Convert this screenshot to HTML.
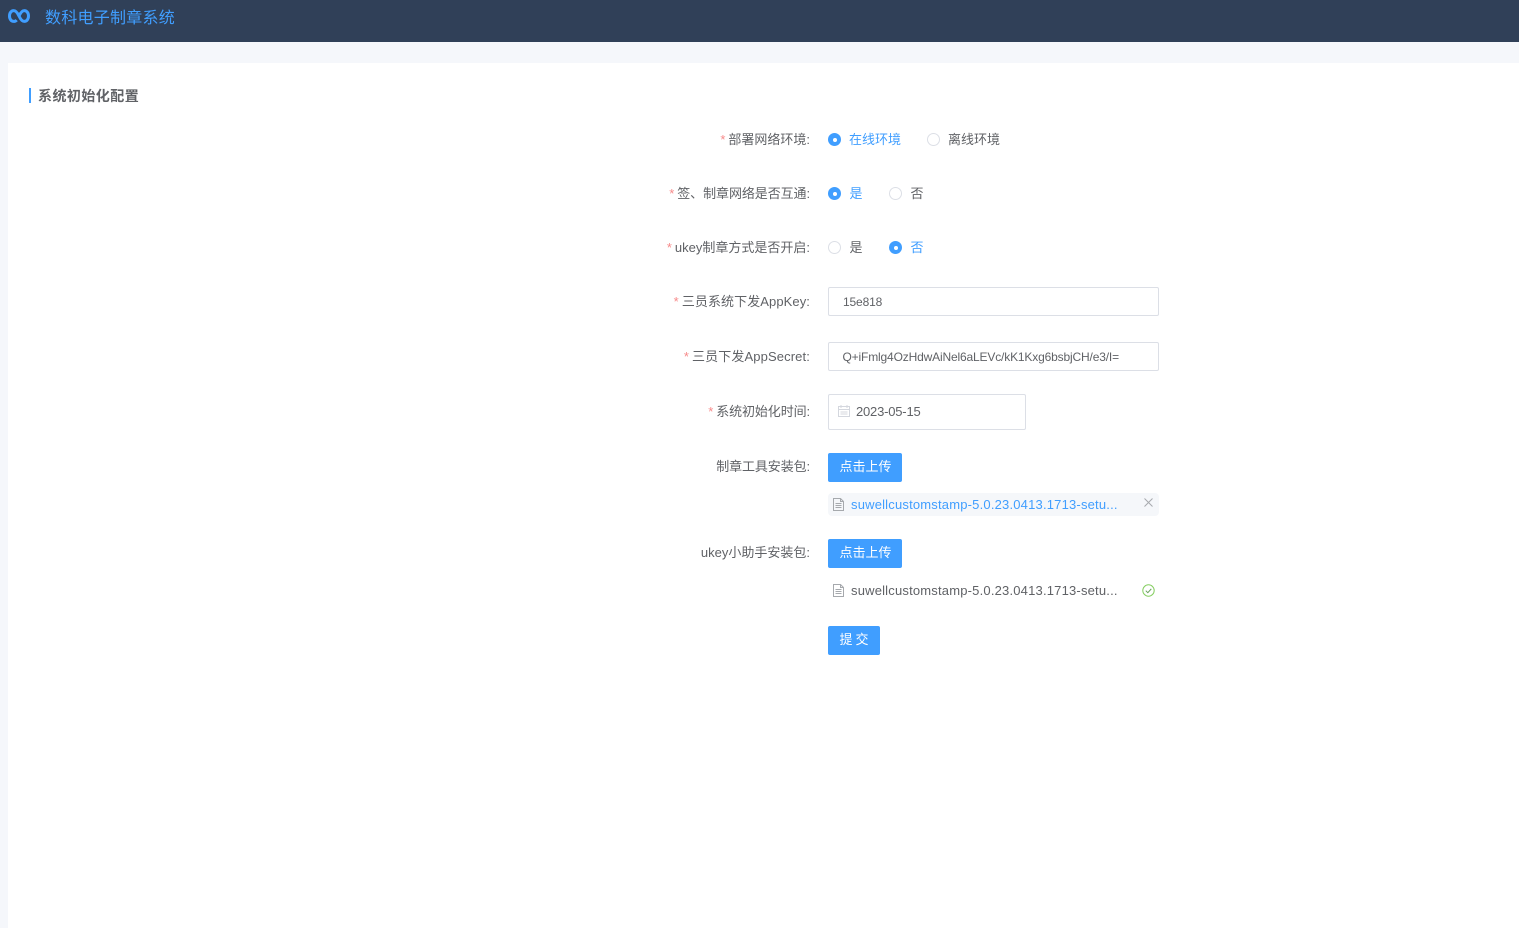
<!DOCTYPE html>
<html lang="zh-CN">
<head>
<meta charset="utf-8">
<title>数科电子制章系统</title>
<style>
html,body{margin:0;padding:0;width:1519px;height:928px;overflow:hidden;background:#f5f7fb;}
body{position:relative;font-family:"Liberation Sans","Noto Sans CJK SC",sans-serif;font-size:13px;color:#606266;}
.a{position:absolute;white-space:nowrap;}
.hdr{left:0;top:0;width:1519px;height:42px;background:#304058;}
.main{left:8px;top:63px;width:1511px;height:865px;background:#fff;}
.lb{right:709px;height:20px;line-height:20px;font-size:13px;color:#606266;}
.lb i{font-style:normal;color:#f78989;margin-right:3px;}
.r{width:11px;height:11px;border:1px solid #dcdfe6;border-radius:50%;background:#fff;}
.r.on{background:#409eff;border-color:#409eff;}
.r.on:after{content:"";position:absolute;left:4px;top:4px;width:4px;height:4px;border-radius:50%;background:#fff;}
.t{height:20px;line-height:20px;font-size:13px;color:#606266;}
.t.on{color:#409eff;}
.in{box-sizing:border-box;border:1px solid #dcdfe6;border-radius:2px;background:#fff;font-size:12px;color:#606266;padding-left:14px;}
.btn{background:#409eff;color:#fff;border-radius:2px;font-size:13px;text-align:center;}
.fn{height:20px;line-height:20px;font-size:13px;letter-spacing:.19px;}
</style>
</head>
<body>
<div class="a hdr"></div>
<svg class="a" style="left:8px;top:9px" width="22" height="14" viewBox="0 0 22 14" fill="none" stroke="#409eff" stroke-width="3">
<path d="M11 7C9.500 3.800 8 1.600 5.700 1.600 3.200 1.600 1.500 4 1.500 7s1.700 5.400 4.200 5.400c1.300 0 2.300-.5 3-1.300"/>
<path d="M11 7c1.500-3.200 3-5.400 5.300-5.400 2.500 0 4.200 2.400 4.200 5.400s-1.700 5.400-4.200 5.400c-2.300 0-3.800-2.200-5.300-5.400z"/>
</svg>
<div class="a" style="left:45px;top:9px;height:20px;line-height:20px;font-size:16px;letter-spacing:.25px;color:#409eff">数科电子制章系统</div>

<div class="a main"></div>
<div class="a" style="left:29px;top:88px;width:2px;height:15px;background:#409eff"></div>
<div class="a" style="left:38px;top:86px;height:20px;line-height:20px;font-size:14px;letter-spacing:.45px;font-weight:700;color:#606266">系统初始化配置</div>

<div class="a lb" style="top:130px"><i>*</i>部署网络环境:</div>
<div class="a r on" style="left:828px;top:133px"></div>
<div class="a t on" style="left:849px;top:130px">在线环境</div>
<div class="a r" style="left:927px;top:133px"></div>
<div class="a t" style="left:948px;top:130px">离线环境</div>

<div class="a lb" style="top:184px;letter-spacing:-.08px"><i>*</i>签、制章网络是否互通:</div>
<div class="a r on" style="left:828px;top:187px"></div>
<div class="a t on" style="left:849.500px;top:184px">是</div>
<div class="a r" style="left:889px;top:187px"></div>
<div class="a t" style="left:910.500px;top:184px">否</div>

<div class="a lb" style="top:238px"><i>*</i>ukey制章方式是否开启:</div>
<div class="a r" style="left:828px;top:241px"></div>
<div class="a t" style="left:849.500px;top:238px">是</div>
<div class="a r on" style="left:889px;top:241px"></div>
<div class="a t on" style="left:910.500px;top:238px">否</div>

<div class="a lb" style="top:292px;letter-spacing:.08px"><i>*</i>三员系统下发AppKey:</div>
<div class="a in" style="left:828px;top:287px;width:331px;height:29px;line-height:28px;letter-spacing:-.15px">15e818</div>

<div class="a lb" style="top:347px;letter-spacing:.12px"><i>*</i>三员下发AppSecret:</div>
<div class="a in" style="left:828px;top:342px;width:331px;height:29px;line-height:28px;letter-spacing:-.16px;padding-left:13.500px">Q+iFmlg4OzHdwAiNel6aLEVc/kK1Kxg6bsbjCH/e3/I=</div>

<div class="a lb" style="top:402px;letter-spacing:-.1px"><i>*</i>系统初始化时间:</div>
<div class="a in" style="left:828px;top:394px;width:198px;height:36px;line-height:33px;padding-left:27px;font-size:13px;letter-spacing:-.2px">2023-05-15</div>
<svg class="a" style="left:838px;top:405px" width="12" height="12" viewBox="0 0 12 12" fill="none" stroke="#d4d7de" stroke-width="1">
<rect x=".5" y="1.500" width="11" height="10"/><path d="M.5 4.500h11M3 0v3M9 0v3M2.500 7h7M2.500 9h7"/>
</svg>

<div class="a lb" style="top:457px;letter-spacing:-.1px">制章工具安装包:</div>
<div class="a btn" style="left:828px;top:453px;width:74px;height:29px;line-height:27px;text-indent:1px">点击上传</div>
<div class="a" style="left:828px;top:493px;width:331px;height:23px;background:#f5f7fa;border-radius:4px"></div>
<svg class="a" style="left:833px;top:498px" width="11" height="13" viewBox="0 0 11 13" fill="none" stroke="#a6a9ad" stroke-width="1">
<path d="M.5.500h7l3 3v9H.5zM7.500.500v3h3M2.500 5.500h6M2.500 7.500h6M2.500 9.500h6"/>
</svg>
<div class="a fn" style="left:851px;top:495px;color:#409eff">suwellcustomstamp-5.0.23.0413.1713-setu...</div>
<svg class="a" style="left:1144px;top:498px" width="9" height="9" viewBox="0 0 9 9" stroke="#a6a9ad" stroke-width="1"><path d="M.5.500l8 8M8.500.500l-8 8"/></svg>

<div class="a lb" style="top:543px">ukey小助手安装包:</div>
<div class="a btn" style="left:828px;top:539px;width:74px;height:29px;line-height:27px;text-indent:1px">点击上传</div>
<svg class="a" style="left:833px;top:584px" width="11" height="13" viewBox="0 0 11 13" fill="none" stroke="#a6a9ad" stroke-width="1">
<path d="M.5.500h7l3 3v9H.5zM7.500.500v3h3M2.500 5.500h6M2.500 7.500h6M2.500 9.500h6"/>
</svg>
<div class="a fn" style="left:851px;top:581px;color:#606266">suwellcustomstamp-5.0.23.0413.1713-setu...</div>
<svg class="a" style="left:1142px;top:584px" width="13" height="13" viewBox="0 0 13 13" fill="none" stroke="#85ce61" stroke-width="1"><circle cx="6.500" cy="6.500" r="5.700"/><path d="M3.800 6.700l2 2 3.500-3.800" stroke="#67a05a"/></svg>

<div class="a btn" style="left:828px;top:626px;width:52px;height:29px;line-height:27px;letter-spacing:3px;text-indent:3px">提交</div>
</body>
</html>
